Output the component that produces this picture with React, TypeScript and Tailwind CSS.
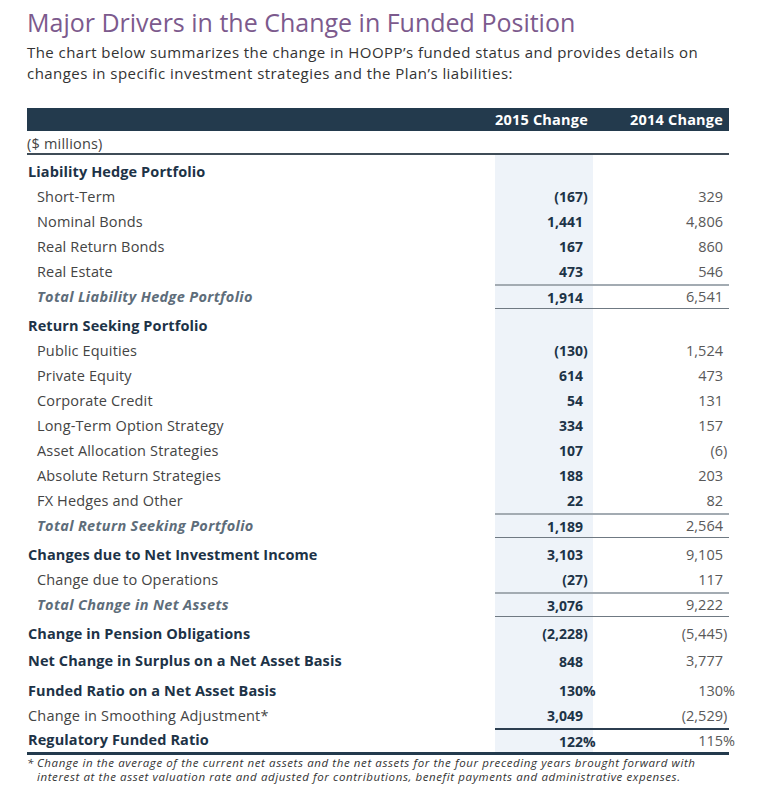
type Kind = "section" | "item" | "total" | "plain" | "final";

type Row = {
  label: string;
  a?: string;
  b?: string;
  kind: Kind;
  h: string;
  pad?: string;
};

const rows: Row[] = [
  { label: "Liability Hedge Portfolio", kind: "section", h: "h-[29px]", pad: "pt-[4px]" },
  { label: "Short-Term", a: "(167)", b: "329", kind: "item", h: "h-[25px]" },
  { label: "Nominal Bonds", a: "1,441", b: "4,806", kind: "item", h: "h-[25px]" },
  { label: "Real Return Bonds", a: "167", b: "860", kind: "item", h: "h-[25px]" },
  { label: "Real Estate", a: "473", b: "546", kind: "item", h: "h-[25px]" },
  { label: "Total Liability Hedge Portfolio", a: "1,914", b: "6,541", kind: "total", h: "h-[25px]" },
  { label: "Return Seeking Portfolio", kind: "section", h: "h-[29px]", pad: "pt-[4px]" },
  { label: "Public Equities", a: "(130)", b: "1,524", kind: "item", h: "h-[25px]" },
  { label: "Private Equity", a: "614", b: "473", kind: "item", h: "h-[25px]" },
  { label: "Corporate Credit", a: "54", b: "131", kind: "item", h: "h-[25px]" },
  { label: "Long-Term Option Strategy", a: "334", b: "157", kind: "item", h: "h-[25px]" },
  { label: "Asset Allocation Strategies", a: "107", b: "(6)", kind: "item", h: "h-[25px]" },
  { label: "Absolute Return Strategies", a: "188", b: "203", kind: "item", h: "h-[25px]" },
  { label: "FX Hedges and Other", a: "22", b: "82", kind: "item", h: "h-[25px]" },
  { label: "Total Return Seeking Portfolio", a: "1,189", b: "2,564", kind: "total", h: "h-[25px]" },
  { label: "Changes due to Net Investment Income", a: "3,103", b: "9,105", kind: "section", h: "h-[29px]", pad: "pt-[4px]" },
  { label: "Change due to Operations", a: "(27)", b: "117", kind: "item", h: "h-[25px]" },
  { label: "Total Change in Net Assets", a: "3,076", b: "9,222", kind: "total", h: "h-[25px]" },
  { label: "Change in Pension Obligations", a: "(2,228)", b: "(5,445)", kind: "section", h: "h-[29px]", pad: "pt-[4px]" },
  { label: "Net Change in Surplus on a Net Asset Basis", a: "848", b: "3,777", kind: "section", h: "h-[28px]", pad: "pt-[2px]" },
  { label: "Funded Ratio on a Net Asset Basis", a: "130%", b: "130%", kind: "section", h: "h-[29px]", pad: "pt-[4px]" },
  { label: "Change in Smoothing Adjustment*", a: "3,049", b: "(2,529)", kind: "plain", h: "h-[25px]" },
  { label: "Regulatory Funded Ratio", a: "122%", b: "115%", kind: "final", h: "h-[24px]" },
];

function Num({ v }: { v?: string }) {
  if (!v) return null;
  const last = v.slice(-1);
  if (last === ")" || last === "%") {
    return (
      <>
        {v.slice(0, -1)}
        <span className="inline-block w-0">{last}</span>
      </>
    );
  }
  return <>{v}</>;
}

function TableRow({ row }: { row: Row }) {
  const pad = row.pad ?? "";
  const label =
    row.kind === "section" || row.kind === "final"
      ? "pl-px font-bold text-[#1d3347] tracking-[0.1px]"
      : row.kind === "total"
        ? "pl-[10px] font-bold italic text-[#5e6d7a] tracking-[0.35px]"
        : row.kind === "plain"
          ? "pl-px text-[#444] tracking-[0.2px]"
          : "pl-[10px] text-[#444] tracking-[0.15px]";

  const cell =
    row.kind === "total"
      ? "border-t-2 border-b border-t-[#a3abb2] border-b-[#6f7982]"
      : row.kind === "final"
        ? "border-t-2 border-t-[#2c3e50]"
        : "";

  return (
    <div className={`flex ${row.h} ${row.kind === "final" ? "box-content border-b-[3px] border-[#233a4d]" : ""}`}>
      <div className={`flex flex-1 items-center text-[14.5px] ${pad} ${label}`}>{row.label}</div>
      <div
        className={`flex w-[98px] items-center justify-end bg-[#eef3f9] pr-[10px] text-[14px] font-bold text-[#1d3347] ${pad} ${cell}`}
      >
        <Num v={row.a} />
      </div>
      <div className={`flex w-[136px] items-center justify-end pr-[6px] text-[14.5px] text-[#595959] ${pad} ${cell}`}>
        <Num v={row.b} />
      </div>
    </div>
  );
}

export default function App() {
  return (
    <div className="h-[796px] w-[765px] bg-white pl-[27px] pt-[6px] font-['Open_Sans',sans-serif]">
      <h1 className="text-[25px] leading-[32px] text-[#7c5a8d]">Major Drivers in the Change in Funded Position</h1>
      <p className="mt-[4px] whitespace-nowrap text-[15px] leading-[21px] tracking-[0.45px] text-[#333]">
        The chart below summarizes the change in HOOPP’s funded status and provides details on
        <br />
        changes in specific investment strategies and the Plan’s liabilities:
      </p>

      <div className="mt-[24px] w-[702px]">
        <div className="flex h-[23px] items-center bg-[#233a4d] text-[14.5px] font-bold tracking-[0.2px] text-white">
          <div className="flex-1" />
          <div className="w-[98px] pr-[10px] text-right whitespace-nowrap">2015 Change</div>
          <div className="w-[136px] pr-[6px] text-right whitespace-nowrap">2014 Change</div>
        </div>
        <div className="flex h-[24px] items-center border-b-2 border-[#3f4c57] pt-[4px] text-[14.5px] tracking-[0.2px] text-[#444]">
          ($ millions)
        </div>
        {rows.map((r) => (
          <TableRow key={r.label} row={r} />
        ))}
        <div className="flex whitespace-nowrap pt-px text-[11.5px] italic leading-[14px] tracking-[0.6px] text-[#333]">
          <span className="w-[10px] shrink-0">*</span>
          <span>
            Change in the average of the current net assets and the net assets for the four preceding years brought
            forward with
            <br />
            interest at the asset valuation rate and adjusted for contributions, benefit payments and administrative
            expenses.
          </span>
        </div>
      </div>
    </div>
  );
}
